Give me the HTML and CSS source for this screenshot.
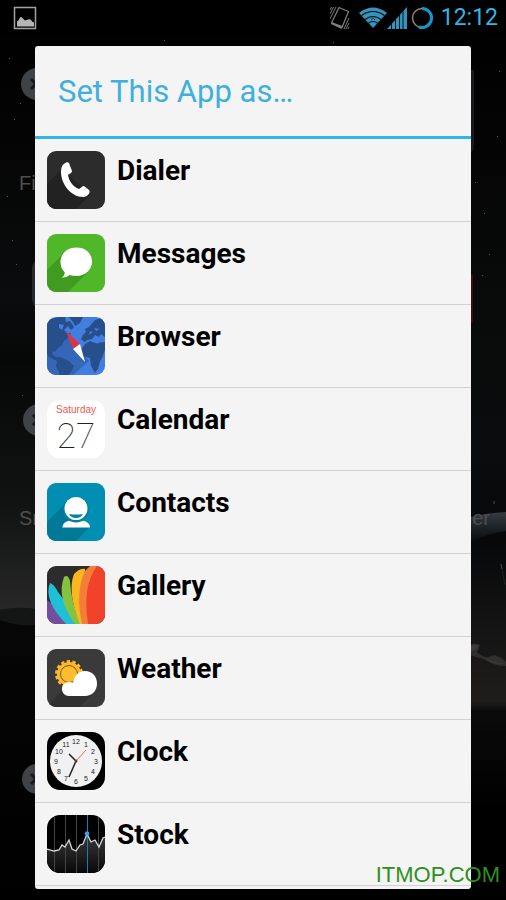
FILE: index.html
```html
<!DOCTYPE html>
<html lang="en">
<head>
  <meta charset="UTF-8" />
  <meta name="viewport" content="width=device-width, initial-scale=1.0" />
  <title>Set This App as…</title>
  <link rel="stylesheet" href="styles.css">
</head>
<body>
  <!-- Dimmed home screen behind the dialog -->
  <div class="wallpaper" aria-hidden="true">
    <svg class="wallpaper-art" viewBox="0 0 506 900" preserveAspectRatio="none">
      <defs>
        <linearGradient id="skyLeft" x1="0" y1="0" x2="0" y2="1">
          <stop offset="0" stop-color="#000"/>
          <stop offset=".12" stop-color="#030303"/>
          <stop offset=".33" stop-color="#0b0c0d"/>
          <stop offset=".4" stop-color="#060707"/>
          <stop offset=".56" stop-color="#111212"/>
          <stop offset=".675" stop-color="#272727"/>
          <stop offset=".69" stop-color="#131414"/>
          <stop offset=".72" stop-color="#050505"/>
          <stop offset="1" stop-color="#000"/>
        </linearGradient>
        <linearGradient id="skyRight" x1="0" y1="0" x2="0" y2="1">
          <stop offset="0" stop-color="#000"/>
          <stop offset=".12" stop-color="#030303"/>
          <stop offset=".38" stop-color="#0a0b0b"/>
          <stop offset=".5" stop-color="#0a0c0d"/>
          <stop offset=".6" stop-color="#07080a"/>
          <stop offset=".68" stop-color="#121212"/>
          <stop offset=".78" stop-color="#1f1d1c"/>
          <stop offset=".79" stop-color="#0a0a0a"/>
          <stop offset=".9" stop-color="#000"/>
        </linearGradient>
        <linearGradient id="ridge" x1="0" y1="0" x2="0" y2="1">
          <stop offset="0" stop-color="#363c43"/>
          <stop offset=".5" stop-color="#1d2226"/>
          <stop offset="1" stop-color="#090b0c"/>
        </linearGradient>
      </defs>
      <path fill="url(#skyLeft)" d="M0 0h253v900H0z"/>
      <path fill="url(#skyRight)" d="M253 0h253v900H253z"/>
      <path fill="#141515" d="M0 610q18-4 36-1v18H0z"/>
      <path fill="#060606" d="M0 620q18 7 36 5v30H0z"/>
      <path fill="url(#ridge)" d="M470 517q16-4 36-5v19q-18 2-36 12z"/>
      <path fill="#302f2e" d="M470 645q5-3 10 0-1 4-3 7 6 6 12 5 4-3 8-1 6 2 9 6v4q-12 0-20-6l-16-5z"/>
      <path fill="#3c3b3a" d="M470 646q5-2 8 0-1 3-5 5l-3 1zM484 658q9 4 20 6-10 1-20-6z"/>
      <path stroke="#4a4d50" stroke-width="1" fill="none" d="M501 564l1 5M494 501v3"/>
      <path stroke="#202224" stroke-width="1" fill="none" d="M502 569l3 16"/>
      <path fill="#555" d="M7 196h1v1H7zM20 103h1v1h-1zM9 58h1v1H9zM14 119h1v1h-1zM12 240h1v1h-1zM16 264h1v1h-1zM22 395h1v1h-1zM333 42h1v1h-1zM475 182h1v1h-1zM484 213h1v1h-1zM499 71h1v1h-1zM489 254h1v1h-1zM482 275h1v1h-1zM497 136h1v1h-1zM164 40h1v1h-1z"/>
      <path fill="#3c0d12" d="M470 275h3v48h-3z"/>
      <path fill="#17191c" d="M470 70h4v76q0 6-4 6z"/>
      <path fill="#26292d" d="M36 260q-4 4-4 10v28q0 6 4 10z"/>
      <g fill="#3f4247">
        <circle cx="37" cy="84" r="16"/>
        <circle cx="39" cy="420" r="16"/>
        <circle cx="37" cy="779" r="15"/>
      </g>
      <path stroke="#15171a" stroke-width="3" fill="none" d="M31 79l10 10M31 89l10-10M33 415l10 10M33 425l10-10M31 774l10 10M31 784l10-10"/>
    </svg>
    <span class="app-label label-first">Fi</span>
    <span class="app-label label-left">Sm</span>
    <span class="app-label label-right">er</span>
  </div>

  <div class="screen">
    <!-- Status bar -->
    <header class="status-bar">
      <svg class="picture-icon" viewBox="0 0 24 24" width="24" height="24">
        <path d="M1.500 1.500h21v21h-21z" fill="none" stroke="#a3a3a3" stroke-width="1.500"/>
        <path d="M4 20.500v-5q2-1 3-4 1-1 2 0l3 3 3-1q3-1 4 2l2 1v4z" fill="#b4b4b4"/>
      </svg>
      <div class="status-icons">
        <svg viewBox="0 0 20 24" width="20" height="24">
          <path d="M9 1.500l9.500 4-6.500 16L1.500 17z" fill="none" stroke="#7c7c7c" stroke-width="1.300" stroke-linejoin="round"/>
          <path d="M1.500 16l11 4-1 3L1 18z" fill="#7c7c7c"/>
          <path d="M0 13L6 1M0 8l3.500-7M0 4l1.500-3M19 12l-5 11M19 17l-3 6M19 21l-1 2" fill="none" stroke="#7c7c7c" stroke-width="1"/>
        </svg>
        <svg class="wifi" viewBox="0 0 28 22" width="28" height="22">
          <path d="M14 21L0 6Q14-5 28 6z" fill="#3494bb"/>
          <path d="M2.500 8.500q11.500-8 23 0M6 12.500q8-6 16 0M9.500 16q4.500-3 9 0" fill="none" stroke="#000" stroke-width="1.100"/>
          <path d="M12 13l2-2 2 2" fill="none" stroke="#123d50"/>
        </svg>
        <svg class="signal" viewBox="0 0 20 22" width="20" height="22">
          <path d="M0 22L20 0v22z" fill="#3494bb"/>
          <path d="M4.500 15v7M8.500 11v11M12.500 7v15M16 3v19" stroke="#03141c" stroke-width="1"/>
        </svg>
        <svg class="battery" viewBox="0 0 22 24" width="22" height="24">
          <circle cx="11" cy="12" r="9.500" fill="none" stroke="#8a8178" stroke-width="1.500"/>
          <path d="M11 2.500a9.500 9.500 0 1 1-3 18.500" fill="none" stroke="#1398cc" stroke-width="3"/>
        </svg>
        <time class="clock">12:12</time>
      </div>
    </header>

    <!-- Dialog -->
    <main class="dialog">
      <h1 class="dialog-title">Set This App as…</h1>
      <ul class="app-list">
        <li>
          <button class="app-row" type="button">
            <svg class="app-icon" viewBox="0 0 58 58">
              <path fill="#2c2c2c" d="M0 0h58v58H0z"/>
              <path fill="#222" d="M15 18L0 33v25h29l14-14z"/>
              <path fill="#fff" d="M17 13c2-2 4-2 5-1l3 8c0 2-3 3-4 4 1 6 5 12 11 14 2-1 3-3 5-3l5 4c2 2-1 7-6 7-12 0-22-13-22-25 0-4 1-7 3-8z"/>
            </svg>
            <span>Dialer</span>
          </button>
        </li>
        <li>
          <button class="app-row" type="button">
            <svg class="app-icon" viewBox="0 0 58 58">
              <path fill="#50b828" d="M0 0h58v58H0z"/>
              <path fill="#409c20" d="M16 20L0 36v22h21l20-20z"/>
              <path fill="#fff" d="M29.500 13.500c9 0 15.500 6 15.500 14s-6.500 14.500-15.500 14.500q-4 0-7-1-3 3-8 2.500 4-2 3-5.500c-3-3-4-6-4-10 0-8.500 7-14.500 16-14.500z"/>
            </svg>
            <span>Messages</span>
          </button>
        </li>
        <li>
          <button class="app-row" type="button">
            <svg class="app-icon" viewBox="0 0 58 58">
              <path fill="#427ee0" d="M0 0h58v58H0z"/>
              <path fill="#3467b8" d="M20 16L0 36v22h26l16-14z"/>
              <path fill="#274f8b" d="M0 6l4-4 8-2h6l1 5 4-1 4 6-3 3-3-4-4 4 3 3 4 0-3 5-4 3-2 4-4 3-3 4-2-1-1 3 4 3 4 0 9 4 5 5-3 6-4 4-3 6h-4l-1-10-3-6 1-5-8-4-4-7 1-9-1-5zM22 0h14l-3 6-5 3-2-4zM36 18l3-3-1-3 4-2 6-7 10-3v20l-4-3-2 3-4-2-3 4-5 1-2 2-4-3zM38 27l5-3 5 2 10-1v8l-3 8-2 3-2 8-3 4-4-7-1-8-7-2-2-6z"/>
              <path fill="#427ee0" d="M12 7l5 1-2 5-3-2zM43 14l3 1-4 3zM47 11l6 1-4 2zM48 24l4 1-2 2z"/>
              <path fill="#e2343e" d="M19 14l14 13-7 5z"/>
              <path fill="#fff" d="M33 27l5 18-12-13z"/>
            </svg>
            <span>Browser</span>
          </button>
        </li>
        <li>
          <button class="app-row" type="button">
            <svg class="app-icon round" viewBox="0 0 58 58">
              <path fill="#fff" d="M0 0h58v58H0z"/>
              <text class="cal-day" x="29" y="13" text-anchor="middle">Saturday</text>
              <text class="cal-date" x="29" y="48" text-anchor="middle">27</text>
            </svg>
            <span>Calendar</span>
          </button>
        </li>
        <li>
          <button class="app-row" type="button">
            <svg class="app-icon" viewBox="0 0 58 58">
              <path fill="#008fb3" d="M0 0h58v58H0z"/>
              <path fill="#007897" d="M19 20L0 39v19h29l14-14z"/>
              <path fill="#fff" d="M15.500 44.500c0-4 3-6 7-7h13c4 1 7.500 3 7.500 7z"/>
              <circle cx="29" cy="26.500" r="13" fill="#007fa1"/>
              <circle cx="29" cy="25.500" r="11.500" fill="#fff"/>
              <path fill="#007fa1" d="M22 31q7 1 14 0-2 4-7 4t-7-4z"/>
            </svg>
            <span>Contacts</span>
          </button>
        </li>
        <li>
          <button class="app-row" type="button">
            <svg class="app-icon" viewBox="0 0 58 58">
              <path fill="#2c2c2c" d="M0 0h58v58H0z"/>
              <path fill="#754d9d" d="M0 34q14 9 20 24H0z"/>
              <path fill="#1dc0d4" d="M3 17q4 1 8 9 13 16 17 32h-9Q-4 34 3 17z"/>
              <path fill="#82c442" d="M17 11q4-3 6 4 1 22 11 43h-6Q9 32 17 11z"/>
              <path fill="#fbb81e" d="M27 8q6-6 11-5l-2 55h-3Q20 26 27 8z"/>
              <path fill="#f47e38" d="M38 5l5-5h10L43 58h-8Q28 26 38 5z"/>
              <path fill="#f0432a" d="M50 0h8v58H41Q35 20 50 0z"/>
            </svg>
            <span>Gallery</span>
          </button>
        </li>
        <li>
          <button class="app-row" type="button">
            <svg class="app-icon" viewBox="0 0 58 58">
              <path fill="#3a3a3a" d="M0 0h58v58H0z"/>
              <path fill="#303030" d="M16 41L0 57v1h33l12-12z"/>
              <circle cx="22" cy="25" r="12" fill="none" stroke="#fcba2b" stroke-width="4" stroke-dasharray="3.200 2.200"/>
              <circle cx="22" cy="25" r="12" fill="#fcba2b"/>
              <circle cx="22" cy="25" r="8.500" fill="#fdbd2f" stroke="#79591c" stroke-width="1"/>
              <path fill="#fff" d="M22 47c-4 0-7-3-7-7s3-7 7-7q2 0 4 1c1-7 5-12 12-12s12 5 12 12.500S45 47 38 47z"/>
            </svg>
            <span>Weather</span>
          </button>
        </li>
        <li>
          <button class="app-row" type="button">
            <svg class="app-icon round" viewBox="0 0 58 58">
              <path fill="#000" d="M0 0h58v58H0z"/>
              <circle cx="29" cy="29" r="26" fill="#f1f1f1"/>
              <g class="clock-digits" text-anchor="middle">
                <text x="29" y="12">12</text>
                <text x="39" y="15">1</text>
                <text x="46" y="22">2</text>
                <text x="49" y="32">3</text>
                <text x="46" y="42">4</text>
                <text x="39" y="49">5</text>
                <text x="29" y="52">6</text>
                <text x="19" y="49">7</text>
                <text x="12" y="42">8</text>
                <text x="9" y="32">9</text>
                <text x="12" y="22">10</text>
                <text x="19" y="15">11</text>
              </g>
              <path d="M29 29l-7-7M29 29l-7 16" stroke="#222" stroke-width="1.500"/>
              <path d="M29 29l10-11" stroke="#e76a50" stroke-width="1"/>
              <circle cx="29" cy="29" r="1.500" fill="#8b2a1c"/>
            </svg>
            <span>Clock</span>
          </button>
        </li>
        <li>
          <button class="app-row" type="button">
            <svg class="app-icon round" viewBox="0 0 58 58">
              <defs>
                <linearGradient id="stockFill" x1="0" y1="0" x2="0" y2="1">
                  <stop offset="0" stop-color="#3a3a3a"/>
                  <stop offset="1" stop-color="#080808"/>
                </linearGradient>
              </defs>
              <path fill="#000" d="M0 0h58v58H0z"/>
              <path fill="url(#stockFill)" d="M0 34l7 2 5-1 3-5 3 2 4-7 3 9 4 2 4-6 3-1 4-10 4 8 4-2 4 7 4-9 2-1v36H0z"/>
              <path stroke="#444" d="M7.500 0v58M18.500 0v58M29.500 0v58M51.500 0v58"/>
              <path stroke="#207cae" d="M40.500 0v58"/>
              <path fill="none" stroke="#d8d8d8" stroke-width="1.300" d="M0 34l7 2 5-1 3-5 3 2 4-7 3 9 4 2 4-6 3-1 4-10 4 8 4-2 4 7 4-9 2-1"/>
              <circle cx="40" cy="18.500" r="2.300" fill="#2fa0ee"/>
            </svg>
            <span>Stock</span>
          </button>
        </li>
      </ul>
    </main>
  </div>

  <div class="watermark">ITMOP.COM</div>
</body>
</html>
```

FILE: styles.css
```css
* {
  box-sizing: border-box;
}

body {
  margin: 0;
  min-height: 100vh;
  position: relative;
  background-color: #000;
  font-family: Roboto, "Liberation Sans", sans-serif;
}

/* Home screen behind the dialog */
.wallpaper {
  position: absolute;
  inset: 0;
  overflow: hidden;
}

.wallpaper-art {
  display: block;
  width: 100%;
  height: 100%;
}

.app-label {
  position: absolute;
  font-family: "Liberation Sans", sans-serif;
  font-size: 20px;
  line-height: 24px;
  color: #4e4e4e;
}

.label-first {
  top: 171px;
  left: 19px;
}

.label-left {
  top: 506px;
  left: 19px;
}

.label-right {
  top: 506px;
  right: 16px;
}

.screen {
  position: relative;
  min-height: 100vh;
  display: flex;
  flex-direction: column;
}

/* Status bar */
.status-bar {
  height: 36px;
  padding: 0 8px 0 13px;
  display: flex;
  align-items: center;
  justify-content: space-between;
  background-color: #000;
}

.status-icons {
  display: flex;
  align-items: center;
}

.wifi {
  margin-left: 9px;
}

.battery {
  margin: 0 8px 0 4px;
}

.clock {
  font-size: 23px;
  line-height: 36px;
  color: #33b5e5;
}

/* Dialog */
.dialog {
  margin: 10px 35px 11px;
  padding-bottom: 3px;
  background-color: #f4f4f4;
  border-radius: 3px;
}

.dialog-title {
  margin: 0;
  padding: 2px 23px 0;
  border-bottom: 3px solid #33b5e5;
  font-size: 31px;
  font-weight: 400;
  line-height: 88px;
  color: #3fb0dc;
}

.app-list {
  margin: 0;
  padding: 0;
  list-style: none;
}

.app-row {
  width: 100%;
  height: 83px;
  padding: 12px;
  display: flex;
  align-items: flex-start;
  gap: 12px;
  border: none;
  border-bottom: 1px solid #d2d2d2;
  background: none;
  color: #000;
  font-family: inherit;
  font-size: 28px;
  font-weight: 700;
  line-height: 40px;
  text-align: left;
  cursor: pointer;
}

.app-row:active {
  background-color: #cdeaf6;
}

.app-icon {
  flex: none;
  width: 58px;
  height: 58px;
  border-radius: 9px;
}

.app-icon.round {
  border-radius: 13px;
}

.cal-day {
  font-family: "Liberation Sans", sans-serif;
  font-size: 10px;
  font-weight: 400;
  fill: #ef5a50;
}

.cal-date {
  font-family: Roboto, sans-serif;
  font-size: 35px;
  font-weight: 100;
  fill: #222;
}

.clock-digits {
  font-family: "Liberation Sans", sans-serif;
  font-size: 7px;
  font-weight: 400;
  fill: #222;
}

.watermark {
  position: absolute;
  right: 6px;
  bottom: 13px;
  font-family: "Liberation Sans", sans-serif;
  font-size: 22px;
  line-height: 24px;
  color: #2f8f20;
}
```
